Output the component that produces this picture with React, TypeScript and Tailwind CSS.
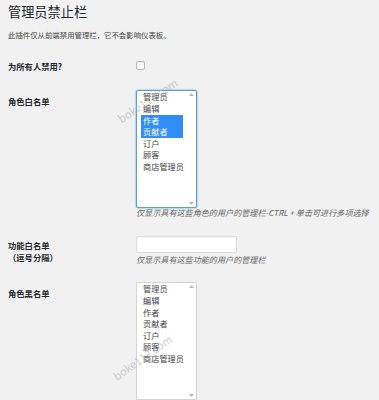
import React from "react";

const roles = ["管理员", "编辑", "作者", "贡献者", "订户", "顾客", "商店管理员"];

function ScrollArrows() {
  return (
    <div className="absolute right-0 top-0 bottom-0 w-[9px] flex flex-col justify-between items-center py-[2px]">
      <svg width="5" height="3" viewBox="0 0 5 3">
        <path d="M0 3 L2.5 0 L5 3 Z" fill="#b8b8b8" />
      </svg>
      <svg width="5" height="3" viewBox="0 0 5 3">
        <path d="M0 0 L2.5 3 L5 0 Z" fill="#b8b8b8" />
      </svg>
    </div>
  );
}

function RoleSelect({ focused, selected }: { focused: boolean; selected: string[] }) {
  return (
    <div
      className={
        focused
          ? "relative w-[61px] h-[118px] bg-white border border-[#5b9dd9] rounded-[2px] shadow-[0_0_2px_rgba(30,140,190,0.8)]"
          : "relative w-[61px] h-[118px] bg-white border border-[#d4d4d4] rounded-[1px]"
      }
    >
      <div className="pl-[4px] pt-[0.2px] flex flex-col">
        {roles.map((r) => {
          const sel = selected.includes(r);
          return (
            <div
              key={r}
              className={
                sel
                  ? "w-[42px] pl-[2px] text-[8.2px] leading-[11.65px] whitespace-nowrap bg-[#2f8df5] text-white"
                  : "w-[42px] pl-[2px] text-[8.2px] leading-[11.65px] whitespace-nowrap text-[#444]"
              }
            >
              {r}
            </div>
          );
        })}
      </div>
      <ScrollArrows />
    </div>
  );
}

export default function App() {
  return (
    <div
      className="relative w-[379px] h-[400px] overflow-hidden bg-[#f1f1f1] pl-[8px]"
      style={{ fontFamily: '"Noto Sans CJK SC", "Noto Sans", sans-serif' }}
    >
      <h1 className="pt-[4px] text-[13.2px] leading-[16px] font-normal text-[#23282d]">管理员禁止栏</h1>
      <p className="mt-[10px] text-[7.4px] leading-[10px] text-[#444]">
        此插件仅从前端禁用管理栏，它不会影响仪表板。
      </p>

      <div className="mt-[21px] flex items-center h-[9px]">
        <div className="w-[128px] text-[8.3px] leading-[10px] font-bold text-[#23282d]">为所有人禁用?</div>
        <div className="w-[9px] h-[9px] bg-[#fbfbfb] border border-[#b4b9be] rounded-[2px] shadow-[inset_0_1px_1px_rgba(0,0,0,0.08)]" />
      </div>

      <div className="mt-[20px] flex">
        <div className="w-[128px] pt-[6px] text-[8.3px] leading-[10px] font-bold text-[#23282d]">角色白名单</div>
        <div className="flex flex-col">
          <RoleSelect focused selected={["作者", "贡献者"]} />
          <div className="text-[8.1px] leading-[10px] italic text-[#666] whitespace-nowrap">
            仅显示具有这些角色的用户的管理栏-CTRL + 单击可进行多项选择
          </div>
        </div>
      </div>

      <div className="mt-[18px] flex">
        <div className="w-[128px] pt-[3px] text-[8.3px] leading-[12px] font-bold text-[#23282d]">
          <div>功能白名单</div>
          <div>（逗号分隔）</div>
        </div>
        <div className="flex flex-col">
          <div className="w-[101px] h-[17px] bg-white border border-[#dcdcdc] rounded-[2px] shadow-[inset_0_1px_2px_rgba(0,0,0,0.07)]" />
          <div className="mt-[2px] text-[8.1px] leading-[10px] italic text-[#666] whitespace-nowrap">
            仅显示具有这些功能的用户的管理栏
          </div>
        </div>
      </div>

      <div className="mt-[17px] flex">
        <div className="w-[128px] pt-[6px] text-[8.3px] leading-[10px] font-bold text-[#23282d]">角色黑名单</div>
        <RoleSelect focused={false} selected={[]} />
      </div>

      <div className="absolute left-[113px] top-[92px] -rotate-[34deg] text-[11px] text-[#b0b0b0] opacity-60 pointer-events-none whitespace-nowrap">
        boke112.com
      </div>
      <div className="absolute left-[108px] top-[349px] -rotate-[35deg] text-[11px] text-[#b0b0b0] opacity-60 pointer-events-none whitespace-nowrap">
        boke112.com
      </div>
    </div>
  );
}
